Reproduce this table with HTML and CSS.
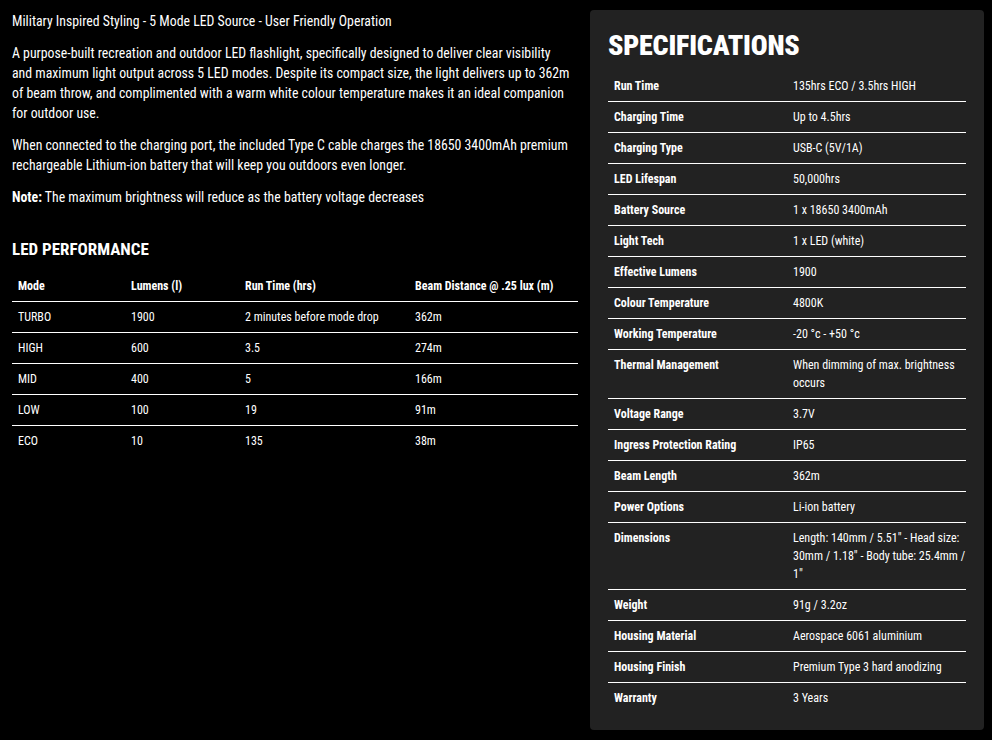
FILE: index.html
```html
<!DOCTYPE html>
<html lang="en">
<head>
<meta charset="utf-8">
<title>Flashlight Specifications</title>
<link rel="stylesheet" href="styles.css">
</head>
<body>
<div class="page">
  <section class="intro">
    <p class="lead">Military Inspired Styling - 5 Mode LED Source - User Friendly Operation</p>
    <p>A purpose-built recreation and outdoor LED flashlight, specifically designed to deliver clear visibility and maximum light output across 5 LED modes. Despite its compact size, the light delivers up to 362m of beam throw, and complimented with a warm white colour temperature makes it an ideal companion for outdoor use.</p>
    <p>When connected to the charging port, the included Type C cable charges the 18650 3400mAh premium rechargeable Lithium-ion battery that will keep you outdoors even longer.</p>
    <p><strong>Note:</strong> The maximum brightness will reduce as the battery voltage decreases</p>

    <h3 class="perf-title">LED PERFORMANCE</h3>
    <table class="perf">
      <colgroup>
        <col class="c1"><col class="c2"><col class="c3"><col class="c4">
      </colgroup>
      <thead>
        <tr><th>Mode</th><th>Lumens (l)</th><th>Run Time (hrs)</th><th>Beam Distance @ .25 lux (m)</th></tr>
      </thead>
      <tbody>
        <tr><td>TURBO</td><td>1900</td><td>2 minutes before mode drop</td><td>362m</td></tr>
        <tr><td>HIGH</td><td>600</td><td>3.5</td><td>274m</td></tr>
        <tr><td>MID</td><td>400</td><td>5</td><td>166m</td></tr>
        <tr><td>LOW</td><td>100</td><td>19</td><td>91m</td></tr>
        <tr><td>ECO</td><td>10</td><td>135</td><td>38m</td></tr>
      </tbody>
    </table>
  </section>

  <aside class="specs">
    <h2>SPECIFICATIONS</h2>
    <table class="spec-table">
      <tbody>
        <tr><th>Run Time</th><td>135hrs ECO / 3.5hrs HIGH</td></tr>
        <tr><th>Charging Time</th><td>Up to 4.5hrs</td></tr>
        <tr><th>Charging Type</th><td>USB-C (5V/1A)</td></tr>
        <tr><th>LED Lifespan</th><td>50,000hrs</td></tr>
        <tr><th>Battery Source</th><td>1 x 18650 3400mAh</td></tr>
        <tr><th>Light Tech</th><td>1 x LED (white)</td></tr>
        <tr><th>Effective Lumens</th><td>1900</td></tr>
        <tr><th>Colour Temperature</th><td>4800K</td></tr>
        <tr><th>Working Temperature</th><td>-20 °c - +50 °c</td></tr>
        <tr><th>Thermal Management</th><td>When dimming of max. brightness occurs</td></tr>
        <tr><th>Voltage Range</th><td>3.7V</td></tr>
        <tr><th>Ingress Protection Rating</th><td>IP65</td></tr>
        <tr><th>Beam Length</th><td>362m</td></tr>
        <tr><th>Power Options</th><td>Li-ion battery</td></tr>
        <tr><th>Dimensions</th><td>Length: 140mm / 5.51" - Head size: 30mm / 1.18" - Body tube: 25.4mm / 1"</td></tr>
        <tr><th>Weight</th><td>91g / 3.2oz</td></tr>
        <tr><th>Housing Material</th><td>Aerospace 6061 aluminium</td></tr>
        <tr><th>Housing Finish</th><td>Premium Type 3 hard anodizing</td></tr>
        <tr><th>Warranty</th><td>3 Years</td></tr>
      </tbody>
    </table>
  </aside>
</div>
</body>
</html>
```

FILE: styles.css
```css
* { box-sizing: border-box; }

html, body {
  margin: 0;
  background: #000;
  color: #fff;
  font-family: "Roboto Condensed", "Liberation Sans Narrow", "DejaVu Sans Condensed", Roboto, sans-serif;
  font-stretch: condensed;
}

.page {
  display: grid;
  grid-template-columns: 566px 394px;
  column-gap: 12px;
  padding: 10px 8px 0 12px;
  align-items: start;
}

.intro {
  padding-top: 1px;
}

.intro p {
  margin: 0 0 12px;
  max-width: 560px;
  font-size: 13.8px;
  line-height: 20px;
}

.intro strong { font-weight: 700; }

.perf-title {
  margin: 30px 0 10px;
  font-size: 17px;
  line-height: 24px;
  font-weight: 700;
}

table {
  border-collapse: collapse;
  width: 100%;
  table-layout: fixed;
}

.perf th,
.perf td,
.spec-table th,
.spec-table td {
  font-size: 12px;
  line-height: 18px;
  padding: 6px 6px;
  text-align: left;
  vertical-align: top;
}

.perf th { font-weight: 700; }
.perf td { font-weight: 400; }

.perf .c1 { width: 113px; }
.perf .c2 { width: 114px; }
.perf .c3 { width: 170px; }

.perf thead tr,
.perf tbody tr:not(:last-child) {
  border-bottom: 1px solid #fff;
}

.specs {
  background: #222;
  border-radius: 4px;
  padding: 18px 18px 17px;
  min-height: 719px;
}

.specs h2 {
  margin: 0 0 8px;
  font-size: 28px;
  line-height: 35px;
  font-weight: 900;
  letter-spacing: -0.2px;
}

.spec-table th { width: 50%; font-weight: 700; }
.spec-table td { font-weight: 400; padding-right: 0; }

.spec-table tr:not(:last-child) {
  border-bottom: 1px solid #fff;
}
```
